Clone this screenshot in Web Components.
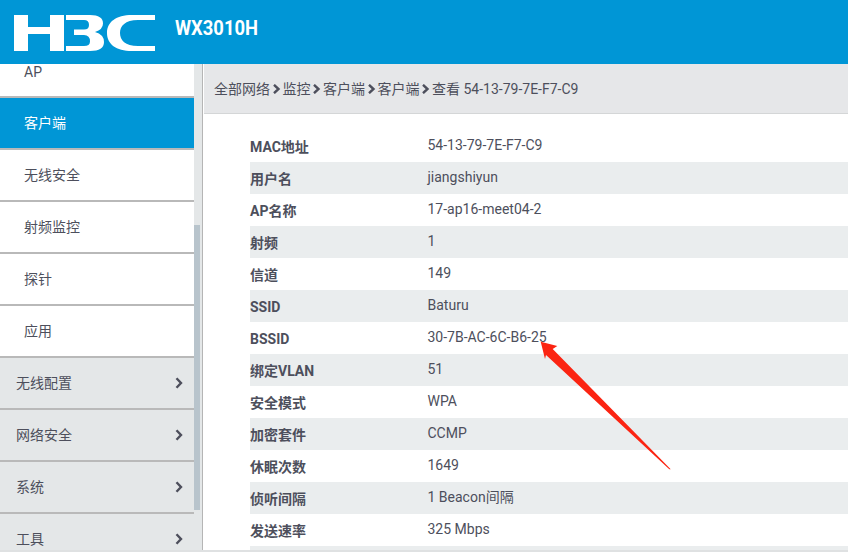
<!DOCTYPE html>
<html>
<head>
<meta charset="utf-8">
<title>WX3010H</title>
<style>
    html, body { margin: 0; height: 100%; overflow: hidden; }
    body {
        font-family: Roboto, "Noto Sans CJK SC", sans-serif;
        font-size: 14px;
        color: #4d4f5c;
        background: #fff;
    }
    #page { display: flex; flex-direction: column; height: 552px; }
    #main { display: flex; flex: 1; min-height: 0; }
    #foot { flex: 0 0 2px; background: #dfe1e2; }
</style>
</head>
<body>
<div id="page">
    <h3c-header product="WX3010H"></h3c-header>
    <div id="main">
        <side-nav>
            <nav-item clipped>AP</nav-item>
            <nav-item active>客户端</nav-item>
            <nav-item>无线安全</nav-item>
            <nav-item>射频监控</nav-item>
            <nav-item>探针</nav-item>
            <nav-item>应用</nav-item>
            <nav-item group>无线配置</nav-item>
            <nav-item group>网络安全</nav-item>
            <nav-item group>系统</nav-item>
            <nav-item group>工具</nav-item>
        </side-nav>
        <detail-panel>
            <bread-crumb slot="crumb" path="全部网络,监控,客户端,客户端,查看 54-13-79-7E-F7-C9"></bread-crumb>
            <info-row label="MAC地址">54-13-79-7E-F7-C9</info-row>
            <info-row label="用户名">jiangshiyun</info-row>
            <info-row label="AP名称">17-ap16-meet04-2</info-row>
            <info-row label="射频">1</info-row>
            <info-row label="信道">149</info-row>
            <info-row label="SSID">Baturu</info-row>
            <info-row label="BSSID">30-7B-AC-6C-B6-25</info-row>
            <info-row label="绑定VLAN">51</info-row>
            <info-row label="安全模式">WPA</info-row>
            <info-row label="加密套件">CCMP</info-row>
            <info-row label="休眠次数">1649</info-row>
            <info-row label="侦听间隔">1 Beacon间隔</info-row>
            <info-row label="发送速率">325 Mbps</info-row>
            <info-row label=""></info-row>
        </detail-panel>
    </div>
    <div id="foot"></div>
</div>

<template id="h3c-header">
    <style>
        :host {
            display: flex;
            align-items: center;
            flex: 0 0 64px;
            height: 64px;
            background: #0096d6;
            color: #fff;
        }
        svg { margin-left: 14px; flex: none; position: relative; top: 1px; }
        .product {
            margin-left: 20px;
            font: bold 20px Roboto, sans-serif;
            line-height: 20px;
            transform: scaleX(.92);
            transform-origin: left center;
            position: relative;
            top: -4px;
        }
    </style>
    <svg width="141" height="36" viewBox="0 0 141 36" fill="#fff">
        <path d="M0 0H14V12H36V0H50V36H36V19H14V36H0Z"/>
        <path d="M52 0H76Q89 0 89 8.5Q89 14.5 81 17Q90 19.5 90 27Q90 36 76 36H52V31H70Q76 31 76 26.5Q76 20 70 20H60V14.5H70Q75 14.5 75 10Q75 5 70 5H52Z"/>
        <path d="M141 0V5H124C111 5 106 11 106 18C106 25 111 31 124 31H141V36H118C102 36 93 29 93 18C93 7 102 0 118 0Z"/>
    </svg>
    <span class="product"></span>
</template>

<template id="side-nav">
    <style>
        :host {
            display: block;
            position: relative;
            flex: 0 0 203px;
            width: 203px;
            box-sizing: border-box;
            overflow: hidden;
            background: #e4e7e8;
            border-right: 1px solid #b5b5b5;
        }
        .list { width: 194px; }
        .track {
            position: absolute;
            top: 0; right: 2px; bottom: 0;
            width: 6px;
            background: #e4e7e8;
        }
        .thumb {
            position: absolute;
            top: 161px; left: 0; right: 0;
            height: 285px;
            background: #b8c4cc;
        }
    </style>
    <div class="list"><slot></slot></div>
    <div class="track"><div class="thumb"></div></div>
</template>

<template id="nav-item">
    <style>
        :host {
            display: flex;
            align-items: center;
            justify-content: space-between;
            height: 50px;
            padding-left: 24px;
            padding-right: 11px;
            background: #fff;
            border-bottom: 2px solid #b9b9b9;
            font-size: 14px;
            line-height: 16px;
            color: #4d4f5c;
        }
        :host([clipped]) {
            height: 32px;
            align-items: flex-start;
        }
        :host([active]) {
            background: #0096d6;
            color: #fff;
        }
        :host([group]) {
            background: #e4e7e8;
            padding-left: 16px;
        }
        svg { display: none; flex: none; }
        :host([group]) svg { display: block; }
    </style>
    <span><slot></slot></span>
    <svg width="8" height="12" viewBox="0 0 8 12" fill="none" stroke="#4d4f5c" stroke-width="2.4">
        <path d="M1.5 1.2L6 6L1.5 10.8"/>
    </svg>
</template>

<template id="detail-panel">
    <style>
        :host {
            display: block;
            position: relative;
            flex: 1;
            min-width: 0;
            overflow: hidden;
            margin-left: 1px;
            background: #fff;
        }
        .rows { padding: 16px 0 0 46px; }
        svg { position: absolute; left: 0; top: 0; pointer-events: none; }
    </style>
    <slot name="crumb"></slot>
    <div class="rows"><slot></slot></div>
    <!-- red arrow annotation, panel origin is 204,64 -->
    <svg width="644" height="486" viewBox="0 0 644 486">
        <path fill="#fb2412" d="M336.7 277.7L353.3 282L348.7 285L466.7 405.3L465.3 405.3L342 291L341 295Z"/>
    </svg>
</template>

<template id="bread-crumb">
    <style>
        :host {
            display: flex;
            align-items: center;
            height: 49px;
            padding-left: 10px;
            background: #e6e7e9;
            border-bottom: 1px solid #d4d6d7;
            font-size: 14px;
            line-height: 16px;
            color: #4d4f5c;
        }
        #parts { display: flex; align-items: center; }
        svg { margin: 0 1.75px; flex: none; }
    </style>
    <div id="parts"></div>
</template>

<template id="info-row">
    <style>
        :host {
            display: flex;
            height: 32px;
            font-size: 14px;
            line-height: 16px;
            color: #4d4f5c;
        }
        :host(:nth-child(odd)) { background: #eaedee; }
        .label { flex: 0 0 177.5px; padding-top: 9px; font-weight: bold; box-sizing: border-box; }
        .value { padding-top: 7px; }
    </style>
    <div class="label"></div>
    <div class="value"><slot></slot></div>
</template>

<script type="text/javascript">
    function fromTemplate(el, id) {
        var shadow = el.attachShadow({mode: 'open'});
        shadow.appendChild(document.getElementById(id).content.cloneNode(true));
        return shadow;
    }

    class H3cHeader extends HTMLElement {
        constructor() {
            super();
            var shadow = fromTemplate(this, 'h3c-header');
            shadow.querySelector('.product').textContent = this.getAttribute('product');
        }
    }

    class SideNav extends HTMLElement {
        constructor() {
            super();
            fromTemplate(this, 'side-nav');
        }
    }

    class NavItem extends HTMLElement {
        constructor() {
            super();
            fromTemplate(this, 'nav-item');
        }
    }

    class DetailPanel extends HTMLElement {
        constructor() {
            super();
            fromTemplate(this, 'detail-panel');
        }
    }

    class BreadCrumb extends HTMLElement {
        constructor() {
            super();
            var shadow = fromTemplate(this, 'bread-crumb');
            var parts = shadow.getElementById('parts');
            var path = (this.getAttribute('path') || '').split(',');
            path.forEach((name, i) => {
                if (i > 0) {
                    var ns = 'http://www.w3.org/2000/svg';
                    var svg = document.createElementNS(ns, 'svg');
                    svg.setAttribute('width', '9');
                    svg.setAttribute('height', '10');
                    svg.setAttribute('viewBox', '0 0 9 10');
                    var p = document.createElementNS(ns, 'path');
                    p.setAttribute('d', 'M2 .8L6.5 5L2 9.2');
                    p.setAttribute('fill', 'none');
                    p.setAttribute('stroke', '#4d4f5c');
                    p.setAttribute('stroke-width', '2.4');
                    svg.appendChild(p);
                    parts.appendChild(svg);
                }
                var span = document.createElement('span');
                span.textContent = name;
                parts.appendChild(span);
            });
        }
    }

    class InfoRow extends HTMLElement {
        constructor() {
            super();
            var shadow = fromTemplate(this, 'info-row');
            shadow.querySelector('.label').textContent = this.getAttribute('label');
        }
    }

    customElements.define('h3c-header', H3cHeader);
    customElements.define('side-nav', SideNav);
    customElements.define('nav-item', NavItem);
    customElements.define('detail-panel', DetailPanel);
    customElements.define('bread-crumb', BreadCrumb);
    customElements.define('info-row', InfoRow);
</script>
</body>
</html>
